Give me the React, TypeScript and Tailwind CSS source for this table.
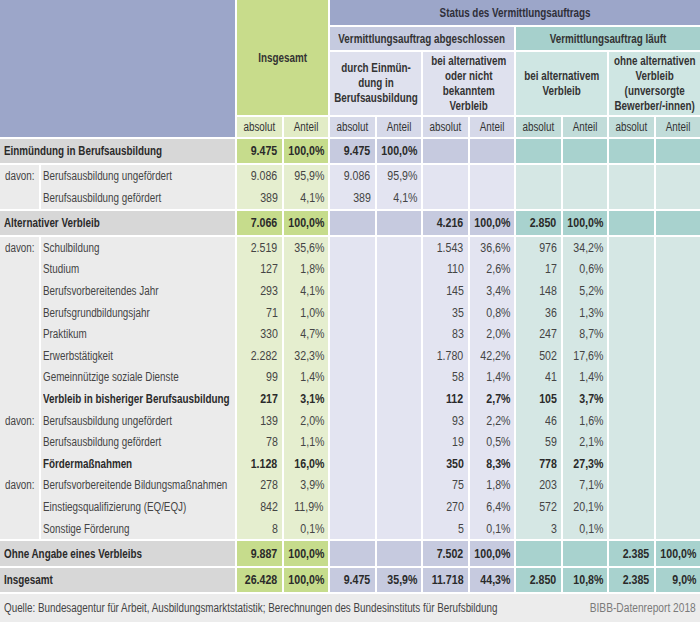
import React from "react";

type G = "g" | "b" | "t";
const groups: G[] = ["g", "g", "b", "b", "b", "b", "t", "t", "t", "t"];

const bodyBg: Record<G, string> = {
  g: "bg-[#e5eecf]",
  b: "bg-[#e3e4f1]",
  t: "bg-[#d5e7e4]",
};
const mainBg: Record<G, string> = {
  g: "bg-[#c6dc8c]",
  b: "bg-[#c6cadf]",
  t: "bg-[#a8d2ce]",
};

type Row = {
  davon?: string;
  label: string;
  bold?: boolean;
  vals: (string | null)[];
};

const e = null;

const group1: Row[] = [
  { davon: "davon:", label: "Berufsausbildung ungefördert", vals: ["9.086", "95,9%", "9.086", "95,9%", e, e, e, e, e, e] },
  { label: "Berufsausbildung gefördert", vals: ["389", "4,1%", "389", "4,1%", e, e, e, e, e, e] },
];

const group2: Row[] = [
  { davon: "davon:", label: "Schulbildung", vals: ["2.519", "35,6%", e, e, "1.543", "36,6%", "976", "34,2%", e, e] },
  { label: "Studium", vals: ["127", "1,8%", e, e, "110", "2,6%", "17", "0,6%", e, e] },
  { label: "Berufsvorbereitendes Jahr", vals: ["293", "4,1%", e, e, "145", "3,4%", "148", "5,2%", e, e] },
  { label: "Berufsgrundbildungsjahr", vals: ["71", "1,0%", e, e, "35", "0,8%", "36", "1,3%", e, e] },
  { label: "Praktikum", vals: ["330", "4,7%", e, e, "83", "2,0%", "247", "8,7%", e, e] },
  { label: "Erwerbstätigkeit", vals: ["2.282", "32,3%", e, e, "1.780", "42,2%", "502", "17,6%", e, e] },
  { label: "Gemeinnützige soziale Dienste", vals: ["99", "1,4%", e, e, "58", "1,4%", "41", "1,4%", e, e] },
  { label: "Verbleib in bisheriger Berufsausbildung", bold: true, vals: ["217", "3,1%", e, e, "112", "2,7%", "105", "3,7%", e, e] },
  { davon: "davon:", label: "Berufsausbildung ungefördert", vals: ["139", "2,0%", e, e, "93", "2,2%", "46", "1,6%", e, e] },
  { label: "Berufsausbildung gefördert", vals: ["78", "1,1%", e, e, "19", "0,5%", "59", "2,1%", e, e] },
  { label: "Fördermaßnahmen", bold: true, vals: ["1.128", "16,0%", e, e, "350", "8,3%", "778", "27,3%", e, e] },
  { davon: "davon:", label: "Berufsvorbereitende Bildungsmaßnahmen", vals: ["278", "3,9%", e, e, "75", "1,8%", "203", "7,1%", e, e] },
  { label: "Einstiegsqualifizierung (EQ/EQJ)", vals: ["842", "11,9%", e, e, "270", "6,4%", "572", "20,1%", e, e] },
  { label: "Sonstige Förderung", vals: ["8", "0,1%", e, e, "5", "0,1%", "3", "0,1%", e, e] },
];

/* narrow text: the reference uses a condensed face */
function L({ children }: { children: React.ReactNode }) {
  return <span className="inline-block whitespace-nowrap scale-x-[0.82] origin-left">{children}</span>;
}
function R({ children }: { children: React.ReactNode }) {
  return <span className="inline-block whitespace-nowrap scale-x-[0.85] origin-right">{children}</span>;
}
function C({ children }: { children: React.ReactNode }) {
  return <span className="inline-block whitespace-nowrap scale-x-[0.82] origin-center">{children}</span>;
}

function MainRow({ label, vals, h }: { label: string; vals: (string | null)[]; h: string }) {
  return (
    <>
      <div className={`col-span-2 bg-[#d7d7d7] flex items-center pl-[4px] font-bold text-[#2a2a2a] ${h}`}>
        <L>{label}</L>
      </div>
      {vals.map((v, i) => (
        <div
          key={i}
          className={`${mainBg[groups[i]]} ${h} flex items-center justify-end pr-[4px] font-bold text-[#2a2a2a] text-[12.5px]`}
        >
          {v ? <R>{v}</R> : null}
        </div>
      ))}
    </>
  );
}

function SubRow({ row, h }: { row: Row; h: string }) {
  const w = row.bold ? "font-bold text-[#2a2a2a]" : "text-[#444]";
  return (
    <>
      <div className={`bg-[#ebebeb] ${h} flex items-center pl-[5px] text-[#444]`}>
        {row.davon ? <L>{row.davon}</L> : null}
      </div>
      <div className={`bg-[#ebebeb] ${h} flex items-center pl-[2px] ${w}`}>
        <L>{row.label}</L>
      </div>
      {row.vals.map((v, i) => (
        <div key={i} className={`${bodyBg[groups[i]]} ${h} flex items-center justify-end pr-[4px] text-[12.5px] ${w}`}>
          {v ? <R>{v}</R> : null}
        </div>
      ))}
    </>
  );
}

const Spacer = () => <div className="col-span-12 h-[2px]" />;

export default function App() {
  return (
    <div className="w-[700px] h-[622px] bg-white overflow-hidden font-['Liberation_Sans',Arial,sans-serif] text-[12px] leading-[14px]">
      {/* header */}
      <div className="grid grid-cols-[39px_194px_repeat(10,minmax(0,1fr))] grid-rows-[25px_23px_63px_20px] gap-[2px]">
        <div className="col-start-1 col-span-2 row-start-1 row-span-4 bg-[#9ca6c9]" />
        <div className="col-start-3 col-span-2 row-start-1 row-span-3 bg-[#c8dc8b] flex items-center justify-center font-bold text-[#333]">
          <C>Insgesamt</C>
        </div>
        <div className="col-start-5 col-span-8 row-start-1 bg-[#9ca6c9] flex items-center justify-center font-bold text-[#2f2f3a]">
          <C>Status des Vermittlungsauftrags</C>
        </div>
        <div className="col-start-5 col-span-4 row-start-2 bg-[#c5cadf] flex items-center justify-center font-bold text-[#333]">
          <C>Vermittlungsauftrag abgeschlossen</C>
        </div>
        <div className="col-start-9 col-span-4 row-start-2 bg-[#a6d0cc] flex items-center justify-center font-bold text-[#333]">
          <C>Vermittlungsauftrag läuft</C>
        </div>
        <div className="col-start-5 col-span-2 row-start-3 bg-[#dfe1ee] flex items-center justify-center text-center font-bold text-[#333] leading-[15px]">
          <C>
            durch Einmün-
            <br />
            dung in
            <br />
            Berufsausbildung
          </C>
        </div>
        <div className="col-start-7 col-span-2 row-start-3 bg-[#dfe1ee] flex items-center justify-center text-center font-bold text-[#333] leading-[15px]">
          <C>
            bei alternativem
            <br />
            oder nicht
            <br />
            bekanntem
            <br />
            Verbleib
          </C>
        </div>
        <div className="col-start-9 col-span-2 row-start-3 bg-[#cfe6e3] flex items-center justify-center text-center font-bold text-[#333] leading-[15px]">
          <C>
            bei alternativem
            <br />
            Verbleib
          </C>
        </div>
        <div className="col-start-11 col-span-2 row-start-3 bg-[#cfe6e3] flex items-center justify-center text-center font-bold text-[#333] leading-[15px]">
          <C>
            ohne alternativen
            <br />
            Verbleib
            <br />
            (unversorgte
            <br />
            Bewerber/-innen)
          </C>
        </div>
        {groups.map((g, i) => (
          <div
            key={i}
            className={`row-start-4 flex items-center justify-center text-[#333] ${
              g === "g" ? "bg-[#e2ecc6]" : g === "b" ? "bg-[#d6d9e9]" : "bg-[#c1dcd9]"
            }`}
          >
            <C>{i % 2 === 0 ? "absolut" : "Anteil"}</C>
          </div>
        ))}
      </div>

      {/* body */}
      <div className="mt-[2px] grid grid-cols-[39px_194px_repeat(10,minmax(0,1fr))] gap-x-[2px] gap-y-0">
        <MainRow
          label="Einmündung in Berufsausbildung"
          h="h-[24px]"
          vals={["9.475", "100,0%", "9.475", "100,0%", e, e, e, e, e, e]}
        />
        <Spacer />
        {group1.map((r, i) => (
          <SubRow key={i} row={r} h="h-[22px]" />
        ))}
        <Spacer />
        <MainRow
          label="Alternativer Verbleib"
          h="h-[24px]"
          vals={["7.066", "100,0%", e, e, "4.216", "100,0%", "2.850", "100,0%", e, e]}
        />
        <Spacer />
        {group2.map((r, i) => (
          <SubRow key={i} row={r} h="h-[21.6px]" />
        ))}
        <Spacer />
        <MainRow
          label="Ohne Angabe eines Verbleibs"
          h="h-[25px]"
          vals={["9.887", "100,0%", e, e, "7.502", "100,0%", e, e, "2.385", "100,0%"]}
        />
        <Spacer />
        <MainRow
          label="Insgesamt"
          h="h-[24px]"
          vals={["26.428", "100,0%", "9.475", "35,9%", "11.718", "44,3%", "2.850", "10,8%", "2.385", "9,0%"]}
        />
      </div>

      {/* footer */}
      <div className="mt-[2px] h-[28px] bg-[#ececec] flex items-center pl-[4px] pr-[4px] text-[12px]">
        <div className="flex-1 min-w-0 text-[#444]">
          <L>Quelle: Bundesagentur für Arbeit, Ausbildungsmarktstatistik; Berechnungen des Bundesinstituts für Berufsbildung</L>
        </div>
        <div className="shrink-0 text-[#7a7a7a]">
          <R>BIBB-Datenreport 2018</R>
        </div>
      </div>
    </div>
  );
}
